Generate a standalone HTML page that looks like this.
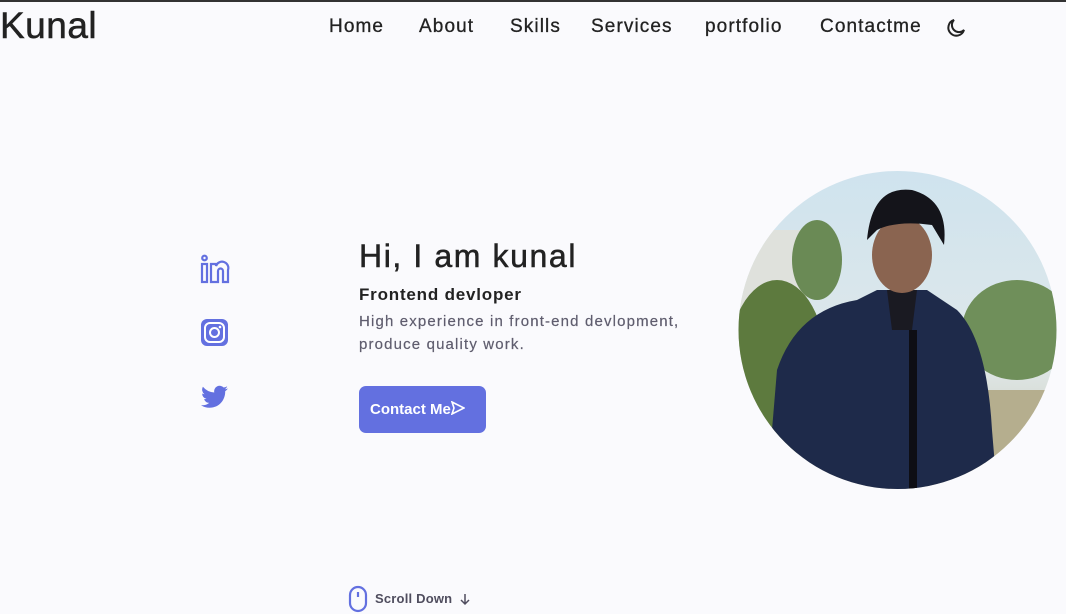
<!DOCTYPE html>
<html><head><style>
*{margin:0;padding:0;box-sizing:border-box}
body{width:1066px;height:614px;background:#fafafd;font-family:"Liberation Sans",sans-serif;position:relative;overflow:hidden;color:#1f1d2b;border-top:2px solid #333}
.a{position:absolute;white-space:nowrap}
.nav{font-size:19px;top:14px;color:#222;letter-spacing:1.1px;-webkit-text-stroke:0.3px #222}
</style></head><body>
<div class="a" style="left:0;top:3px;font-size:37px;color:#222;letter-spacing:0.5px;-webkit-text-stroke:0.5px #222">Kunal</div>
<div class="a nav" style="left:329px">Home</div>
<div class="a nav" style="left:419px">About</div>
<div class="a nav" style="left:510px">Skills</div>
<div class="a nav" style="left:591px">Services</div>
<div class="a nav" style="left:705px">portfolio</div>
<div class="a nav" style="left:820px">Contactme</div>
<svg class="a" style="left:944px;top:14px" width="24" height="24" viewBox="0 0 24 24" fill="none" stroke="#222" stroke-width="2"><path d="M20 14A8 8 0 1 1 10 4a6.5 6.5 0 0 0 10 10z"/></svg>

<svg class="a" style="left:200px;top:252px" width="30" height="30" viewBox="0 0 30 30" fill="none" stroke="#6370e0" stroke-width="2.2"><circle cx="4.5" cy="4" r="2.3"/><rect x="2" y="10" width="5" height="18"/><path d="M11 28V10h5v2a6 6 0 0 1 12 4v12h-5V17a2.5 2.5 0 0 0-5 0v11z"/></svg>
<svg class="a" style="left:200px;top:316px" width="29" height="29" viewBox="0 0 29 29"><rect x="1" y="1" width="27" height="27" rx="6" fill="#6370e0"/><rect x="5" y="5" width="19" height="19" rx="5" fill="none" stroke="#fff" stroke-width="2"/><circle cx="14.5" cy="14.5" r="4.5" fill="none" stroke="#fff" stroke-width="2"/><circle cx="20" cy="9" r="1.3" fill="#fff"/></svg>
<svg class="a" style="left:201px;top:383px" width="27" height="24" viewBox="0 0 24 20"><path fill="#6370e0" d="M24 2.3a10 10 0 0 1-2.8.8A5 5 0 0 0 23.3.4a10 10 0 0 1-3.1 1.2A4.9 4.9 0 0 0 11.8 6 14 14 0 0 1 1.7.9a4.9 4.9 0 0 0 1.5 6.6A4.9 4.9 0 0 1 1 6.9a4.9 4.9 0 0 0 3.9 4.8 5 5 0 0 1-2.2.1 4.9 4.9 0 0 0 4.6 3.4A9.9 9.9 0 0 1 0 17.3 14 14 0 0 0 7.5 19.5c9.1 0 14-7.5 14-14v-.6A10 10 0 0 0 24 2.3z"/></svg>

<div class="a" style="left:359px;top:236px;font-size:32px;color:#222;letter-spacing:1.6px;-webkit-text-stroke:0.5px #222">Hi, I am kunal</div>
<div class="a" style="left:359px;top:283px;font-size:17px;font-weight:700;color:#222;letter-spacing:0.8px">Frontend devloper</div>
<div class="a" style="left:359px;top:308px;font-size:15px;line-height:23px;color:#5f5d6e;letter-spacing:1.15px;-webkit-text-stroke:0.2px #5f5d6e">High experience in front-end devlopment,<br>produce quality work.</div>
<div class="a" style="left:359px;top:384px;width:127px;height:47px;background:#6370e0;border-radius:7px;color:#fff;font-size:15px;font-weight:700;padding:15px 0 0 11px">Contact Me<svg width="14" height="14" viewBox="0 0 14 14" style="vertical-align:-1px"><path d="M1 1l12 6-12 6 2-6z" fill="none" stroke="#fff" stroke-width="1.6"/></svg></div>

<svg class="a" style="left:737px;top:168px" width="321" height="320" viewBox="0 0 321 320">
<defs><clipPath id="c"><circle cx="160.5" cy="160" r="159"/></clipPath>
<linearGradient id="s" x1="0" y1="0" x2="0" y2="1"><stop offset="0" stop-color="#cfe3ee"/><stop offset=".6" stop-color="#dfe8ea"/><stop offset="1" stop-color="#c9c4a8"/></linearGradient></defs>
<g clip-path="url(#c)">
<rect width="321" height="320" fill="url(#s)"/>
<rect x="0" y="60" width="70" height="180" fill="#dfe1dc"/>
<ellipse cx="40" cy="200" rx="50" ry="90" fill="#5d7a3e"/>
<ellipse cx="80" cy="90" rx="25" ry="40" fill="#6a8a55"/>
<ellipse cx="280" cy="160" rx="55" ry="50" fill="#6f8f5a"/>
<rect x="230" y="220" width="91" height="100" fill="#b5ae8e"/>
<path d="M30 320 L40 200 Q60 140 120 130 L140 120 L190 120 L220 140 Q250 170 255 260 L260 320Z" fill="#1e2a4a"/>
<path d="M150 120 h30 l-5 40 l-20 0z" fill="#1a1a22"/>
<ellipse cx="165" cy="85" rx="30" ry="38" fill="#8a6450"/>
<path d="M130 70 Q135 15 175 20 Q212 30 207 75 L195 55 Q160 50 140 60z" fill="#14141a"/>
<rect x="172" y="160" width="8" height="160" fill="#0e0e14"/>
</g></svg>

<svg class="a" style="left:348px;top:583px" width="20" height="28" viewBox="0 0 20 28" fill="none" stroke="#6370e0" stroke-width="2.2"><rect x="2" y="2" width="16" height="24" rx="8"/><path d="M10 7v5"/></svg>
<div class="a" style="left:375px;top:589px;font-size:13px;font-weight:700;color:#4f4d5e;letter-spacing:0.2px">Scroll Down</div>
<svg class="a" style="left:458px;top:590px" width="14" height="14" viewBox="0 0 14 14" fill="none" stroke="#4f4d5e" stroke-width="1.5"><path d="M7 2v10M3 8l4 4 4-4"/></svg>
</body></html>
